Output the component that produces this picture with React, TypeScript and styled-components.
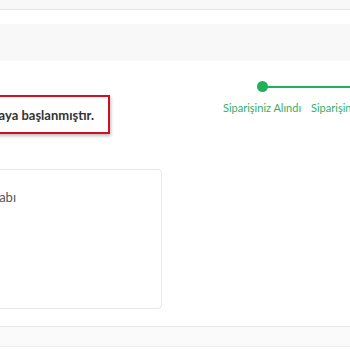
import styled, { createGlobalStyle } from 'styled-components';

const GlobalStyle = createGlobalStyle`
  html, body {
    margin: 0;
    padding: 0;
    background: #ffffff;
    overflow: hidden;
    font-family: Lato, "Open Sans", sans-serif;
  }
`;

const Page = styled.div`
  width: 350px;
  height: 350px;
  display: flex;
  flex-direction: column;
  overflow: hidden;
`;

const TopBar = styled.div`
  height: 9px;
  background: #f8f8f8;
  border-bottom: 1px solid #e6e6e6;
`;

const Breadcrumb = styled.div`
  height: 37px;
  margin-top: 14px;
  background: #f8f8f8;
`;

const StatusRow = styled.div`
  display: flex;
  align-items: flex-start;
  margin-top: 20px;
`;

const AlertSlot = styled.div`
  width: 110px;
  flex-shrink: 0;
  display: flex;
  justify-content: flex-end;
  margin-top: 14px;
`;

const Alert = styled.div`
  flex-shrink: 0;
  white-space: nowrap;
  height: 35px;
  display: flex;
  align-items: center;
  padding: 0 14px;
  border: 2px solid #d0101e;
  box-shadow: 1px 2px 3px rgba(0, 0, 0, 0.25);
  font-size: 13px;
  font-weight: 700;
  color: #333333;
`;

const Steps = styled.div`
  display: flex;
  flex-shrink: 0;
  margin-left: 108px;
`;

const Step = styled.div`
  display: flex;
  flex-direction: column;
  align-items: center;
  gap: 9px;
`;

const Track = styled.div`
  width: 100%;
  display: flex;
  align-items: center;
  height: 11px;
`;

const Segment = styled.div<{ $on: boolean; $side: 'left' | 'right' }>`
  flex: 1;
  height: 2px;
  background: ${p => (p.$on ? '#1fb25a' : 'transparent')};
  margin-left: ${p => (p.$side === 'right' ? '-1px' : '0')};
  margin-right: ${p => (p.$side === 'left' ? '-1px' : '0')};
`;

const Dot = styled.div`
  width: 11px;
  height: 11px;
  border-radius: 50%;
  background: #1fb25a;
  flex-shrink: 0;
`;

const StepLabel = styled.div`
  padding: 0 5px;
  font-size: 11px;
  color: #33b068;
  white-space: nowrap;
`;

const CardSlot = styled.div`
  width: 162px;
  display: flex;
  justify-content: flex-end;
  margin-top: 35px;
`;

const Card = styled.div`
  flex-shrink: 0;
  width: 300px;
  height: 140px;
  border: 1px solid #e8e8e8;
  border-radius: 4px;
  box-sizing: border-box;
  padding: 19px 20px;
`;

const CardTitle = styled.div`
  font-size: 13px;
  color: #555555;
  white-space: nowrap;
`;

const Footer = styled.div`
  margin-top: 17px;
  height: 19px;
  background: #fafafa;
  border-top: 1px solid #e8e8e8;
  border-bottom: 1px solid #ececec;
`;

const steps = ['Siparişiniz Alındı', 'Siparişiniz Hazırlanıyor'];

export default function App() {
  return (
    <Page>
      <GlobalStyle />
      <TopBar />
      <Breadcrumb />
      <StatusRow>
        <AlertSlot>
          <Alert>Siparişiniz hazırlanmaya başlanmıştır.</Alert>
        </AlertSlot>
        <Steps>
          {steps.map((s, i) => (
            <Step key={s}>
              <Track>
                <Segment $side="left" $on={i > 0} />
                <Dot />
                <Segment $side="right" $on={i < steps.length} />
              </Track>
              <StepLabel>{s}</StepLabel>
            </Step>
          ))}
        </Steps>
      </StatusRow>
      <CardSlot>
        <Card>
          <CardTitle>Fatura ve Banka Hesabı</CardTitle>
        </Card>
      </CardSlot>
      <Footer />
    </Page>
  );
}
